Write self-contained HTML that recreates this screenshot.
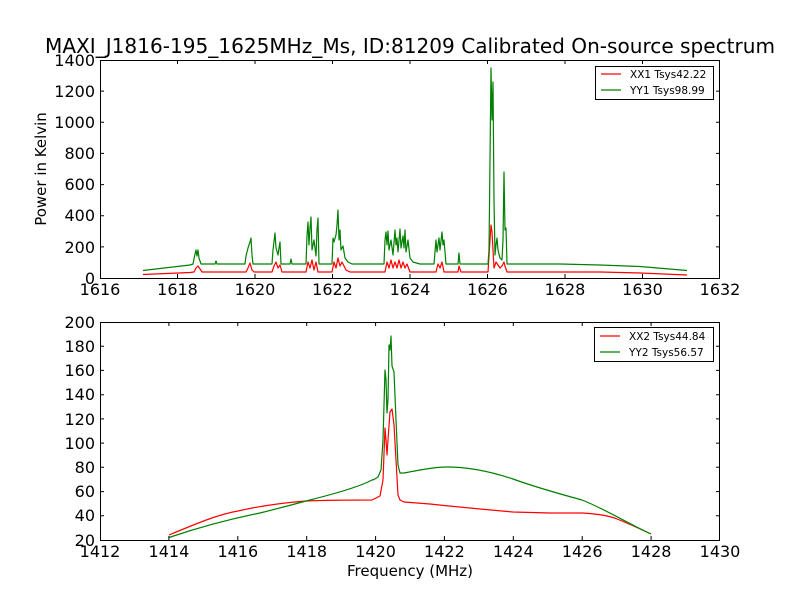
<!DOCTYPE html>
<html><head><meta charset="utf-8"><style>
html,body{margin:0;padding:0;background:#fff;}
svg{display:block;font-family:"DejaVu Sans","Liberation Sans",sans-serif;}
</style></head><body>
<svg width="800" height="600" viewBox="0 0 800 600" xmlns="http://www.w3.org/2000/svg">
<rect width="800" height="600" fill="#fff"/>
<text x="410" y="53" font-size="20" text-anchor="middle" textLength="730" lengthAdjust="spacingAndGlyphs">MAXI_J1816-195_1625MHz_Ms, ID:81209 Calibrated On-source spectrum</text>

<!-- TOP AXES -->
<g fill="none" stroke-width="1.2" stroke-linejoin="round">
<path stroke="#ff0000" d="M143,274.5 L190,272.5 L194,272 L196,268 L198,266 L200,269 L202,272 L246,272 L248,268 L250,263 L252,270 L254,272 L272,272 L274,266 L276,262 L278,268 L280,265 L282,272 L306,272 L308,262 L310,268 L312,260 L314,270 L316,262 L318,272 L332,272 L334,262 L336,268 L338,258 L340,266 L342,262 L346,270 L350,272 L385,272 L387,262 L389,268 L391,260 L393,268 L395,262 L397,268 L399,260 L401,268 L403,262 L405,268 L407,264 L410,272 L436,272 L438,264 L440,268 L442,262 L444,272 L458,272 L459,266 L461,272 L488,272 L490,240 L491,225 L492,232 L494,268 L496,262 L498,265 L500,268 L502,266 L504,262 L505,266 L507,272 L600,272 L640,273 L687,275"/>
<path stroke="#008000" d="M143,270.5 L190,265 L193,264 L195,254 L196,250 L197,256 L198,250 L199,258 L201,264 L215,264 L216,261 L217,264 L245,264 L246,256 L248,248 L250,242 L251,238 L252,255 L253,264 L272,264 L273,250 L275,233 L276,248 L278,255 L279,248 L280,242 L281,264 L290,264 L291,259 L292,264 L306,264 L307,236 L308,222 L309,245 L310,228 L311,217 L312,250 L314,240 L316,256 L317,230 L318,218 L319,264 L332,264 L333,238 L334,242 L336,235 L337,225 L338,210 L339,240 L340,230 L341,250 L343,246 L345,258 L348,262 L352,264 L384,264 L385,240 L386,232 L387,245 L388,231 L389,250 L391,240 L393,255 L395,230 L396,245 L397,238 L398,252 L400,229 L401,248 L403,236 L404,248 L405,230 L406,252 L408,240 L410,258 L413,262 L420,264 L434,264 L436,240 L437,252 L439,238 L440,250 L442,232 L443,245 L444,240 L446,264 L458,264 L459,253 L460,264 L488,264 L489,250 L490,160 L491,68 L492,120 L493,82 L494,200 L495,255 L496,245 L497,238 L498,250 L500,258 L502,260 L503,240 L504,172 L505,230 L506,228 L507,264 L560,264 L600,265 L640,266.5 L687,270.5"/>
</g>
<rect x="100.5" y="60.5" width="619" height="218" fill="none" stroke="#000" stroke-width="1"/>
<g stroke="#000" stroke-width="1">
<path d="M177.5,60v4M255,60v4M332.5,60v4M410,60v4M487.5,60v4M565,60v4M642.5,60v4M177.5,278v-4M255,278v-4M332.5,278v-4M410,278v-4M487.5,278v-4M565,278v-4M642.5,278v-4"/>
<path d="M100,91.1h4M100,122.3h4M100,153.4h4M100,184.6h4M100,215.7h4M100,246.9h4M720,91.1h-4M720,122.3h-4M720,153.4h-4M720,184.6h-4M720,215.7h-4M720,246.9h-4"/>
</g>
<g font-size="16" text-anchor="middle">
<text x="100" y="295">1616</text><text x="177.5" y="295">1618</text><text x="255" y="295">1620</text><text x="332.5" y="295">1622</text><text x="410" y="295">1624</text><text x="487.5" y="295">1626</text><text x="565" y="295">1628</text><text x="642.5" y="295">1630</text><text x="720" y="295">1632</text>
</g>
<g font-size="16" text-anchor="end">
<text x="95" y="66">1400</text><text x="95" y="97">1200</text><text x="95" y="128">1000</text><text x="95" y="159">800</text><text x="95" y="190">600</text><text x="95" y="221">400</text><text x="95" y="253">200</text><text x="95" y="284">0</text>
</g>
<text transform="translate(46,169) rotate(-90)" font-size="15" text-anchor="middle">Power in Kelvin</text>
<rect x="595.5" y="66.5" width="118" height="33" fill="#fff" stroke="#000"/>
<path d="M601,74h20" stroke="#ff0000" stroke-width="1.2"/>
<path d="M601,90h20" stroke="#008000" stroke-width="1.2"/>
<g font-size="10.5"><text x="630" y="78">XX1 Tsys42.22</text><text x="630" y="94">YY1 Tsys98.99</text></g>

<!-- BOTTOM AXES -->
<g fill="none" stroke-width="1.2" stroke-linejoin="round">
<path stroke="#ff0000" d="M169,535 C200,522 220,514 238,511 C260,506 280,503 306,501 C330,500 355,500 372,500 L375,498.5 L380,496 L383,480 L385,428 L386,440 L387,455 L388,440 L390,412 L392,409 L394,425 L396,460 L398,495 L400,500 L404,502 L430,504 L444,505.5 L480,509 L513,512 L550,513 L582,513 C600,514 610,516 617,519 C630,524 640,529 651,534"/>
<path stroke="#008000" d="M169,537.5 C200,527 230,519 260,513 C280,508 295,504 306,501 C330,495 355,488 368,482 L372,480 L374,479.5 L378,477 L381,470 L383,440 L385,370 L386,380 L387,413 L388,400 L389,345 L390,350 L391,336 L392,366 L394,372 L396,420 L398,465 L400,473 L404,473 C420,470 435,467 447,467 C470,467 495,473 513,479 C535,487 560,494 582,500 C605,509 625,522 651,534"/>
</g>
<rect x="100.5" y="322.5" width="619" height="218" fill="none" stroke="#000" stroke-width="1"/>
<g stroke="#000" stroke-width="1">
<path d="M168.9,322v4M237.8,322v4M306.7,322v4M375.6,322v4M444.4,322v4M513.3,322v4M582.2,322v4M651.1,322v4M168.9,540v-4M237.8,540v-4M306.7,540v-4M375.6,540v-4M444.4,540v-4M513.3,540v-4M582.2,540v-4M651.1,540v-4"/>
<path d="M100,346.2h4M100,370.4h4M100,394.7h4M100,418.9h4M100,443.1h4M100,467.3h4M100,491.6h4M100,515.8h4M720,346.2h-4M720,370.4h-4M720,394.7h-4M720,418.9h-4M720,443.1h-4M720,467.3h-4M720,491.6h-4M720,515.8h-4"/>
</g>
<g font-size="16" text-anchor="middle">
<text x="100" y="557">1412</text><text x="168.9" y="557">1414</text><text x="237.8" y="557">1416</text><text x="306.7" y="557">1418</text><text x="375.6" y="557">1420</text><text x="444.4" y="557">1422</text><text x="513.3" y="557">1424</text><text x="582.2" y="557">1426</text><text x="651.1" y="557">1428</text><text x="720" y="557">1430</text>
</g>
<g font-size="16" text-anchor="end">
<text x="95" y="328">200</text><text x="95" y="352">180</text><text x="95" y="376">160</text><text x="95" y="400">140</text><text x="95" y="425">120</text><text x="95" y="449">100</text><text x="95" y="473">80</text><text x="95" y="497">60</text><text x="95" y="521">40</text><text x="95" y="546">20</text>
</g>
<text x="410" y="576" font-size="15" text-anchor="middle">Frequency (MHz)</text>
<rect x="594.5" y="327.5" width="119" height="34" fill="#fff" stroke="#000"/>
<path d="M600,336h20" stroke="#ff0000" stroke-width="1.2"/>
<path d="M600,352h20" stroke="#008000" stroke-width="1.2"/>
<g font-size="10.5"><text x="629" y="340">XX2 Tsys44.84</text><text x="629" y="356">YY2 Tsys56.57</text></g>
</svg>
</body></html>
